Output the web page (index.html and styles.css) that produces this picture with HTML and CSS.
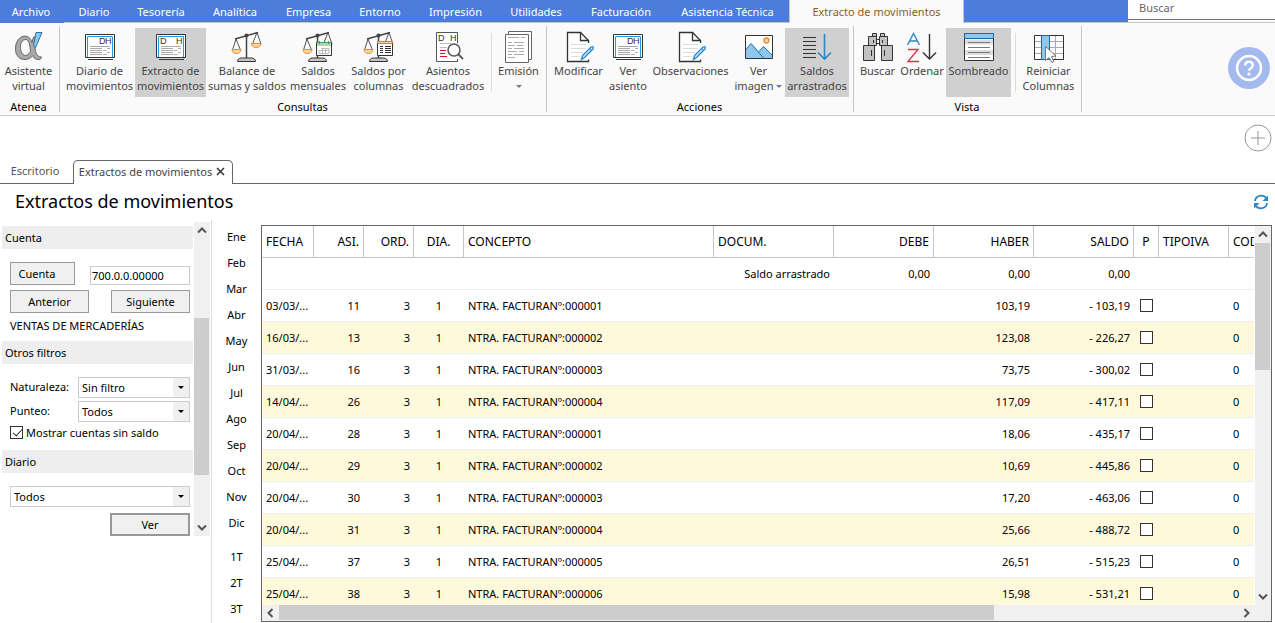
FILE: index.html
```html
<!DOCTYPE html>
<html lang="es">
<head>
<meta charset="utf-8">
<title>Extractos de movimientos</title>
<link rel="stylesheet" href="styles.css">
</head>
<body>
<svg class="sprite" aria-hidden="true">
  <symbol id="scales" viewBox="0 0 32 32">
    <path d="M5 8 1.500 19M5 8l4.500 11M26 1.500 21.500 13M26 1.500l4 11.500" fill="none" stroke="#555"/>
    <path d="M4 8 27 1.500" stroke="#444" stroke-width="1.500"/>
    <path d="M15.500 3v24" stroke="#444" stroke-width="1.500"/>
    <circle cx="15.500" cy="4.500" r="2" fill="#444"/>
    <path d="M1 18.500h9c0 2.500-2 4-4.500 4S1 21 1 18.500ZM20.500 12.500h9.500c0 2.500-2 4-4.800 4s-4.700-1.500-4.700-4Z" fill="#fcd69a" stroke="#e58a3a"/>
    <path d="M6.500 30.500c0-2 1.500-3.500 4-3.500h10c2.500 0 4 1.500 4 3.500Z" fill="#c6c6c6" stroke="#333"/>
  </symbol>
  <symbol id="entry" viewBox="0 0 32 32">
    <path d="M1.500 3.500h29v23h-29Z" fill="#fff" stroke="#333"/>
    <path d="M3.500 26V5.500h25V26" fill="none" stroke="#1a9dd9"/>
    <path d="M6 15.500h20M6 17.500h12M6 19.500h12M6 21.500h12M6 23.500h12M19 19.500h3M23 17.500h3M19 23.500h4M23 21.500h3" stroke="#aaa"/>
    <path d="M4 28.500h25" stroke="#333"/>
  </symbol>
  <symbol id="note" viewBox="0 0 32 32">
    <path d="M25.500 12V9.500L17.500 1.500h-13v29h21v-2" fill="#fff" stroke="#333" stroke-width="1.300"/>
    <path d="M17.500 1.500v8h8" fill="none" stroke="#333" stroke-width="1.300"/>
    <path d="M8 13.500h15M8 17.500h15M8 21.500h12M8 25.500h9" stroke="#ddd"/>
    <path d="m18.500 28.500 1-4L28 16c2-1 3 .5 2 2l-8.500 8.500Z" fill="#c6e4f7" stroke="#2b88c8" stroke-width="1.300"/>
    <path d="m26.500 17.500 2 2" stroke="#2b88c8"/>
  </symbol>
</svg>

<header class="menubar">
  <nav class="tabs">
    <button class="tab tab-file">Archivo</button>
    <button class="tab">Diario</button>
    <button class="tab">Tesorería</button>
    <button class="tab">Analítica</button>
    <button class="tab">Empresa</button>
    <button class="tab">Entorno</button>
    <button class="tab">Impresión</button>
    <button class="tab">Utilidades</button>
    <button class="tab">Facturación</button>
    <button class="tab">Asistencia Técnica</button>
    <button class="tab tab-active">Extracto de movimientos</button>
  </nav>
  <div class="menubar-fill"></div>
  <div class="search"><input type="text" placeholder="Buscar" aria-label="Buscar"></div>
</header>

<section class="ribbon">
  <div class="group">
    <div class="items">
      <button class="item w57"><svg viewBox="0 0 32 32"><path d="M23.500 6 22 15c0 5 1 11 6.500 11 0 2-2 3-4 2.500-3-.5-4-2-4.500-4-6 7-17 5-17.500-6C2 9 9 3.500 14 5.500c3 1 4 3 5 6l1.500-5.500ZM13 8.500c-4 0-6 4-5.500 9 .5 7 6 10 10 3C17 14 16 9 13 8.500Z" fill="#aaa" fill-rule="evenodd" stroke="#666"/><path d="m23 1.500h6l-6.500 15-2-2Z" fill="#8cc8f2" stroke="#2570a8"/></svg><span>Asistente<br>virtual</span></button>
    </div>
    <div class="group-name">Atenea</div>
  </div>
  <div class="group">
    <div class="items">
      <button class="item w71"><svg viewBox="0 0 32 32"><use href="#entry"/><text class="glyph" x="15" y="13">D</text><text class="glyph" x="21" y="13">H</text></svg><span>Diario de<br>movimientos</span></button>
      <button class="item w71 pressed"><svg viewBox="0 0 32 32"><use href="#entry"/><text class="glyph" x="5" y="13">D</text><text class="glyph" x="21" y="13">H</text></svg><span>Extracto de<br>movimientos</span></button>
      <button class="item w82"><svg viewBox="0 0 32 32"><use href="#scales"/></svg><span>Balance de<br>sumas y saldos</span></button>
      <button class="item w60"><svg viewBox="0 0 32 32"><use href="#scales"/><path d="M14.500 11.500h15v13h-15Z" fill="#fff" stroke="#333"/><path d="M15 12h14v3H15Z" fill="#a8d8b4"/><path d="M14.500 11.500h15M17.500 10v3M26.500 10v3" stroke="#4d9a61"/><path d="M19 17.500h8v5H17v-3h10M20.500 17v6M23.500 17v6" fill="none" stroke="#bbb"/></svg><span>Saldos<br>mensuales</span></button>
      <button class="item w61"><svg viewBox="0 0 32 32"><use href="#scales"/><path d="M14.500 11.500h15v13h-15Z" fill="#fff" stroke="#333"/><path d="M14.500 10.500h15v2h-15Z" fill="#fcd69a" stroke="#e07824"/><path d="M17 15.500h3M17 17.500h3M17 19.500h3M17 21.500h3M22 15.500h6M22 17.500h6M22 19.500h6M22 21.500h6" stroke="#333"/></svg><span>Saldos por<br>columnas</span></button>
      <button class="item w78"><svg viewBox="0 0 32 32"><path d="M25.500 12V1.500h-21v29h21V28" fill="#fff" stroke="#555"/><text class="glyph" x="6" y="10">D</text><text class="glyph" x="18" y="10">H</text><path d="M8 12.500h11M8 16.500h7" stroke="#bbb"/><path d="M8 19.500h6M8 22.500h5M8 25.500h7" stroke="#d8102e"/><circle cx="22" cy="19" r="6" fill="#fff" stroke="#555" stroke-width="1.500"/><path d="m26 23 5 5" stroke="#555" stroke-width="1.800"/></svg><span>Asientos<br>descuadrados</span></button>
      <div class="divider"></div>
      <button class="item w45"><svg viewBox="0 0 32 32"><path d="M5.500 4V.5h23v28H26" fill="#fff" stroke="#666"/><path d="M2.500 3.500h23v28h-23Z" fill="#fff" stroke="#666"/><path d="M5 6.500h11M18 6.500h4M5 11.500h4M11 11.500h10M5 14.500h7M14 14.500h6M5 17.500h4M11 17.500h10M5 20.500h9M16 20.500h5M5 23.500h4M11 23.500h10M5 26.500h7" stroke="#aaa"/></svg><span>Emisión<br><i class="caret"></i></span></button>
    </div>
    <div class="group-name">Consultas</div>
  </div>
  <div class="group">
    <div class="items">
      <button class="item w57"><svg viewBox="0 0 32 32"><use href="#note"/></svg><span>Modificar</span></button>
      <button class="item w42"><svg viewBox="0 0 32 32"><use href="#entry"/><text class="glyph" x="15" y="13">D</text><text class="glyph" x="21" y="13">H</text></svg><span>Ver<br>asiento</span></button>
      <button class="item w83"><svg viewBox="0 0 32 32"><use href="#note"/></svg><span>Observaciones</span></button>
      <button class="item w53"><svg viewBox="0 0 32 32"><path d="M2.500 4.500h27v23h-27Z" fill="#fff"/><path d="m2.500 19 5.500-6.500 8 8 4.500-5 9 9v3h-27Z" fill="#8fc6ee"/><path d="m2.500 19 5.500-6.500 13 15M16 20.500l4.500-5 9 9" fill="none" stroke="#2570a8"/><path d="M2.500 4.500h27v23h-27Z" fill="none" stroke="#333"/><circle cx="23.500" cy="9.500" r="2.500" fill="#fcd69a" stroke="#e58a3a" stroke-width="1.300"/></svg><span>Ver<br>imagen <i class="caret"></i></span></button>
      <button class="item w64 pressed"><svg viewBox="0 0 32 32"><path d="M2 6.500h13M2 10.500h13M2 14.500h13M2 18.500h13M2 22.500h13M2 26.500h13" stroke="#333"/><path d="M23.500 3v25M17 21.500l6.500 6.500 6.500-6.500" fill="none" stroke="#2b88c8" stroke-width="1.600"/></svg><span>Saldos<br>arrastrados</span></button>
    </div>
    <div class="group-name">Acciones</div>
  </div>
  <div class="group">
    <div class="items">
      <button class="item w41"><svg viewBox="0 0 32 32"><path d="M10.500 2.500h4v3h-4ZM18.500 2.500h4v3h-4ZM6.500 5.500h8v9h-8ZM17.500 5.500h8v9h-8ZM1.500 14.500h11v15h-11ZM19.500 14.500h11v15h-11Z" fill="#c2c2c2" stroke="#333"/><path d="M14.500 8.500h3M14.500 12.500h3M11.500 9v3M20.500 9v3M9.500 19v6M22.500 19v6" stroke="#333"/></svg><span>Buscar</span></button>
      <button class="item w48"><svg viewBox="0 0 32 32"><path d="M1.500 14 7.500 2.500l6 11.500M4 10h7" fill="none" stroke="#2b88c8" stroke-width="1.400"/><path d="M2 18.500h10L2 30.500h11" fill="none" stroke="#d8384a" stroke-width="1.400"/><path d="M23.500 3v25M17 21.500l6.500 6.500 6.500-6.500" fill="none" stroke="#333" stroke-width="1.400"/></svg><span>Ordenar</span></button>
      <button class="item w65 pressed"><svg viewBox="0 0 32 32"><path d="M1.500 2.500h29v27h-29Z" fill="#fff" stroke="#333"/><path d="M2 8.500h28v5H2ZM2 19h28v5H2Z" fill="#ddd"/><path d="M5 11.500h22M5 16.500h22M5 21.500h22M5 26.500h22" stroke="#777"/><path d="M1.500 2.500h29v5h-29Z" fill="#8fc6ee" stroke="#1f68a5"/></svg><span>Sombreado</span></button>
      <div class="divider"></div>
      <button class="item w57"><svg viewBox="0 0 32 32"><path d="M1.500 4.500h29v24h-29Z" fill="#fff" stroke="#333"/><path d="M2 10.500h28M2 16.500h28M2 22.500h28M22.500 5v23" stroke="#aaa"/><path d="M8.500 4.500h8v24h-8Z" fill="#8fc6ee" stroke="#1f68a5"/><path d="m12.500 15.500 0 14 3.500-3 3 5 2-1-2.500-5 4.500-.5Z" fill="#fff" stroke="#777"/></svg><span>Reiniciar<br>Columnas</span></button>
    </div>
    <div class="group-name">Vista</div>
  </div>
  <button class="help" aria-label="Ayuda"><svg viewBox="0 0 42 42"><circle cx="21" cy="21" r="21" fill="#a4b9ed"/><circle cx="21" cy="21" r="12" fill="none" stroke="#fff" stroke-width="2.500"/><path d="M17.200 18.500c0-5 7.600-5 7.600-.3 0 3-3.800 3-3.800 5.600" fill="none" stroke="#fff" stroke-width="2.500"/><circle cx="21" cy="27" r="1.600" fill="#fff"/></svg></button>
</section>

<div class="toolbar">
  <button class="add" aria-label="Añadir"><svg viewBox="0 0 28 28"><circle cx="14" cy="14" r="13" fill="#fff" stroke="#999"/><path d="M14 7v14M7 14h14" stroke="#999"/></svg></button>
</div>
<nav class="doc-tabs">
  <button class="doc-tab">Escritorio</button>
  <button class="doc-tab doc-current">Extractos de movimientos<svg viewBox="0 0 9 9"><path d="m1 1 7 7M8 1 1 8" stroke="#333" stroke-width="1.500"/></svg></button>
  <span class="doc-rest"></span>
</nav>
<div class="heading">
  <h1>Extractos de movimientos</h1>
  <button class="refresh" aria-label="Actualizar"><svg viewBox="0 0 16 16"><path d="M2 7c.5-6 8.500-7 11.500-2.500M14 9c-.5 6-8.500 7-11.500 2.500" fill="none" stroke="#2b88c8" stroke-width="1.900"/><path d="M15 1.500v5.500H9.500ZM1 14.500V9h5.500Z" fill="#2b88c8"/></svg></button>
</div>

<main class="workspace">
  <aside class="filters">
    <form class="form">
      <h2>Cuenta</h2>
      <div class="block">
        <div class="row"><button type="button" class="btn btn-account">Cuenta</button><input class="account" type="text" value="700.0.0.00000" aria-label="Número de cuenta"></div>
        <div class="row row-nav"><button type="button" class="btn">Anterior</button><button type="button" class="btn">Siguiente</button></div>
        <p class="account-name">VENTAS DE MERCADERÍAS</p>
      </div>
      <h2>Otros filtros</h2>
      <div class="block">
        <div class="field"><label for="nat">Naturaleza:</label><span class="pick"><select id="nat"><option>Sin filtro</option></select></span></div>
        <div class="field"><label for="pun">Punteo:</label><span class="pick"><select id="pun"><option>Todos</option></select></span></div>
        <label class="check"><input type="checkbox" checked>Mostrar cuentas sin saldo</label>
      </div>
      <h2 class="diary-title">Diario</h2>
      <div class="block">
        <span class="pick"><select aria-label="Diario"><option>Todos</option></select></span>
        <button type="button" class="btn btn-view">Ver</button>
      </div>
    </form>
    <div class="vbar"><svg viewBox="0 0 16 17"><path d="m4 10.500 4-4 4 4" /></svg><div class="vthumb side-thumb"></div><svg viewBox="0 0 16 17"><path d="m4 6.500 4 4 4-4"/></svg></div>
  </aside>
  <nav class="periods">
    <button>Ene</button><button>Feb</button><button>Mar</button><button>Abr</button><button>May</button><button>Jun</button><button>Jul</button><button>Ago</button><button>Sep</button><button>Oct</button><button>Nov</button><button>Dic</button>
    <button class="quarter">1T</button><button>2T</button><button>3T</button>
  </nav>
  <section class="grid">
    <div class="view">
      <table>
        <colgroup><col class="c-date"><col class="c-num"><col class="c-num"><col class="c-num"><col class="c-text"><col class="c-doc"><col class="c-sum"><col class="c-sum"><col class="c-sum"><col class="c-p"><col class="c-tax"><col class="c-code"></colgroup>
        <thead><tr><th>FECHA</th><th class="r">ASI.</th><th class="r">ORD.</th><th class="c">DIA.</th><th>CONCEPTO</th><th>DOCUM.</th><th class="r">DEBE</th><th class="r">HABER</th><th class="r">SALDO</th><th class="c">P</th><th>TIPOIVA</th><th>COD</th></tr></thead>
        <tbody>
          <tr><td></td><td></td><td></td><td></td><td></td><td class="r">Saldo arrastrado</td><td class="r">0,00</td><td class="r">0,00</td><td class="r">0,00</td><td></td><td></td><td></td></tr>
          <tr><td>03/03/...</td><td class="r">11</td><td class="r">3</td><td class="c">1</td><td>NTRA. FACTURANº:000001</td><td></td><td></td><td class="r">103,19</td><td class="r">- 103,19</td><td class="c"><input type="checkbox" aria-label="Punteado"></td><td></td><td>0</td></tr>
          <tr class="shade"><td>16/03/...</td><td class="r">13</td><td class="r">3</td><td class="c">1</td><td>NTRA. FACTURANº:000002</td><td></td><td></td><td class="r">123,08</td><td class="r">- 226,27</td><td class="c"><input type="checkbox" aria-label="Punteado"></td><td></td><td>0</td></tr>
          <tr><td>31/03/...</td><td class="r">16</td><td class="r">3</td><td class="c">1</td><td>NTRA. FACTURANº:000003</td><td></td><td></td><td class="r">73,75</td><td class="r">- 300,02</td><td class="c"><input type="checkbox" aria-label="Punteado"></td><td></td><td>0</td></tr>
          <tr class="shade"><td>14/04/...</td><td class="r">26</td><td class="r">3</td><td class="c">1</td><td>NTRA. FACTURANº:000004</td><td></td><td></td><td class="r">117,09</td><td class="r">- 417,11</td><td class="c"><input type="checkbox" aria-label="Punteado"></td><td></td><td>0</td></tr>
          <tr><td>20/04/...</td><td class="r">28</td><td class="r">3</td><td class="c">1</td><td>NTRA. FACTURANº:000001</td><td></td><td></td><td class="r">18,06</td><td class="r">- 435,17</td><td class="c"><input type="checkbox" aria-label="Punteado"></td><td></td><td>0</td></tr>
          <tr class="shade"><td>20/04/...</td><td class="r">29</td><td class="r">3</td><td class="c">1</td><td>NTRA. FACTURANº:000002</td><td></td><td></td><td class="r">10,69</td><td class="r">- 445,86</td><td class="c"><input type="checkbox" aria-label="Punteado"></td><td></td><td>0</td></tr>
          <tr><td>20/04/...</td><td class="r">30</td><td class="r">3</td><td class="c">1</td><td>NTRA. FACTURANº:000003</td><td></td><td></td><td class="r">17,20</td><td class="r">- 463,06</td><td class="c"><input type="checkbox" aria-label="Punteado"></td><td></td><td>0</td></tr>
          <tr class="shade"><td>20/04/...</td><td class="r">31</td><td class="r">3</td><td class="c">1</td><td>NTRA. FACTURANº:000004</td><td></td><td></td><td class="r">25,66</td><td class="r">- 488,72</td><td class="c"><input type="checkbox" aria-label="Punteado"></td><td></td><td>0</td></tr>
          <tr><td>25/04/...</td><td class="r">37</td><td class="r">3</td><td class="c">1</td><td>NTRA. FACTURANº:000005</td><td></td><td></td><td class="r">26,51</td><td class="r">- 515,23</td><td class="c"><input type="checkbox" aria-label="Punteado"></td><td></td><td>0</td></tr>
          <tr class="shade"><td>25/04/...</td><td class="r">38</td><td class="r">3</td><td class="c">1</td><td>NTRA. FACTURANº:000006</td><td></td><td></td><td class="r">15,98</td><td class="r">- 531,21</td><td class="c"><input type="checkbox" aria-label="Punteado"></td><td></td><td>0</td></tr>
        </tbody>
      </table>
    </div>
    <div class="vbar"><svg viewBox="0 0 16 17"><path d="m4 10.500 4-4 4 4"/></svg><div class="vthumb"></div><svg viewBox="0 0 16 17"><path d="m4 6.500 4 4 4-4"/></svg></div>
    <div class="hbar"><svg viewBox="0 0 17 16"><path d="m10.500 4-4 4 4 4"/></svg><div class="hthumb"></div><svg viewBox="0 0 17 16"><path d="m6.500 4 4 4-4 4"/></svg></div>
    <div class="corner"></div>
  </section>
</main>
</body>
</html>
```
FILE: styles.css
```css
* { box-sizing: border-box; }
html, body { margin: 0; height: 100%; }
body {
  display: flex;
  flex-direction: column;
  overflow: hidden;
  background: #fff;
  color: #000;
  font: 11px/15px "Noto Sans", "Open Sans", sans-serif;
}
button, input, select { font: inherit; color: inherit; margin: 0; border-radius: 0; }
button { padding: 0; border: 0; background: none; white-space: nowrap; }
h1, h2, p { margin: 0; font-weight: 400; }
.sprite { display: none; }

/* menu bar */
.menubar { display: flex; flex: none; height: 23px; background: #fafafa; }
.tabs { display: grid; grid-template-columns: 64px 60px 74px 74px 73px 70px 81px 80px 90px 123px 175px; }
.tab { color: #fff; background: #4c7cdc; border-bottom: 1px solid #c6c6c6; }
.tab-file { border-color: #4c7cdc; padding-right: 2px; }
.tab-active { background: #fafafa; color: #8a6212; border: 0; border-left: 1px solid #c6c6c6; border-right: 1px solid #c6c6c6; }
.menubar-fill { flex: 1; background: #4c7cdc; border-bottom: 1px solid #c6c6c6; }
.search { width: 147px; border-bottom: 1px solid #c6c6c6; }
.search input { display: block; width: 100%; height: 20px; padding: 0 10px 4px 11px; border: 0; border-bottom: 1px solid #777; background: #fff; outline: 0; }
.search input::placeholder { color: #666; opacity: 1; }

/* ribbon */
.ribbon { display: flex; flex: none; height: 93px; background: #fafafa; border-bottom: 1px solid #c6c6c6; }
.group { padding: 5px 4px 0; border-right: 1px solid #c6c6c6; border-image: linear-gradient(transparent 4px, #c6c6c6 4px, #c6c6c6 88px, transparent 88px) 1; }
.group:first-child { padding: 5px 2px 0 0; }
.group:nth-child(2) { padding-right: 5px; }
.group:nth-child(3), .group:nth-child(4) { padding-left: 3px; }
.items { display: flex; height: 69px; }
.group-name { padding-top: 2px; text-align: center; }
.item { display: flex; flex-direction: column; align-items: center; padding-top: 3px; color: #444; }
.item svg { width: 32px; height: 32px; flex: none; }
.pressed { background: #d0d0d0; }
.divider { width: 1px; height: 59px; margin: 5px 4px 0; background: #ddd; }
.glyph { font: 9px "Liberation Sans", sans-serif; fill: #333; }
.w41 { width: 41px; }
.w42 { width: 42px; }
.w45 { width: 45px; }
.w48 { width: 48px; }
.w53 { width: 53px; }
.w57 { width: 57px; }
.w60 { width: 60px; }
.w61 { width: 61px; }
.w64 { width: 64px; }
.w65 { width: 65px; }
.w71 { width: 71px; }
.w78 { width: 78px; }
.w82 { width: 82px; }
.w83 { width: 83px; }
.caret { display: inline-block; border: 3px solid transparent; border-top-color: #777; border-bottom: 0; vertical-align: 2px; }
.help { margin: 24px 5px 0 auto; width: 42px; height: 42px; }
.help svg { display: block; width: 42px; height: 42px; }

/* document tabs and heading */
.toolbar { display: flex; flex: none; height: 44px; justify-content: flex-end; padding: 8px 3px 0 0; }
.add, .add svg { display: block; width: 28px; height: 28px; }
.doc-tabs { display: flex; flex: none; height: 24px; color: #444; }
.doc-tab { width: 73px; padding: 0 3px 2px 0; border-bottom: 1px solid #666; color: #555; }
.doc-current { display: flex; align-items: center; justify-content: center; gap: 4px; width: 160px; padding: 0 2px 2px 0; border: 1px solid #666; border-bottom: 0; border-radius: 5px 5px 0 0; color: #444; }
.doc-current svg { width: 9px; height: 9px; }
.doc-rest { flex: 1; border-bottom: 1px solid #666; }
.heading { display: flex; flex: none; justify-content: space-between; align-items: center; height: 36px; padding: 0 6px 0 15px; }
h1 { padding-bottom: 2px; font-size: 18px; line-height: 24px; }
.refresh, .refresh svg { display: block; width: 16px; height: 16px; }

/* workspace */
.workspace { display: flex; flex: 1; min-height: 0; }
.filters { display: flex; align-items: flex-start; width: 212px; padding: 2px 1px 0 2px; border-right: 1px solid #ddd; }
.form { flex: 1; padding: 4px 1px 0 0; }
h2 { height: 23px; padding: 4px 3px; background: #eee; font-size: 11px; line-height: 15px; }
.block { padding: 13px 3px 0 8px; }
.row { display: flex; justify-content: space-between; align-items: flex-end; }
.row-nav { margin-top: 5px; }
.btn { width: 79px; height: 23px; border: 1px solid #999; background: #f0f0f0; }
.btn-account { width: 65px; padding-right: 11px; }
.account { width: 100px; height: 19px; padding: 0 1px; border: 1px solid #ccc; background: #fff; }
.account-name { margin: 5px 0 8px; }
.field { display: flex; justify-content: space-between; height: 24px; }
.field .pick { width: 112px; }
.field label { padding-top: 2px; }
.pick { position: relative; display: block; height: 21px; }
.pick select { display: block; width: 100%; height: 21px; padding: 0 3px; border: 1px solid #ccc; appearance: none; background: linear-gradient(#f0f0f0, #f0f0f0) right / 16px 100% no-repeat #fff; }
.pick::after { content: ""; position: absolute; right: 6px; top: 9px; border: 3px solid transparent; border-top-color: #000; border-bottom: 0; pointer-events: none; }
.check { display: flex; align-items: center; gap: 3px; height: 15px; }
input[type="checkbox"] { appearance: none; display: block; position: relative; width: 13px; height: 13px; border: 1px solid #333; background: #fff; }
input[type="checkbox"]:checked::after { content: ""; position: absolute; left: 4px; top: 0; width: 4px; height: 8px; border: solid #333; border-width: 0 1px 1px 0; transform: rotate(42deg); }
td input[type="checkbox"] { margin: 0 auto; }
.diary-title { margin-top: 10px; }
.btn-view { display: block; width: 80px; margin: 6px 0 0 auto; border: 2px solid #999; }
.periods { display: flex; flex-direction: column; width: 49px; flex: none; padding-top: 3px; }
.periods button { flex: none; height: 26px; }
.periods .quarter { margin-top: 8px; }
.vbar { display: flex; flex-direction: column; justify-content: space-between; width: 16px; background: #f0f0f0; }
.filters .vbar { height: 314px; }
.vbar svg, .hbar svg { width: 17px; height: 17px; flex: none; fill: none; stroke: #555; stroke-width: 2; }
.vbar svg { width: 16px; }
.vthumb { height: 127px; margin: 0 1px 0 0; background: #cdcdcd; }
.grid .vthumb { margin-bottom: auto; }
.side-thumb { height: 157px; margin: auto 1px 44px 0; }
.grid { display: grid; flex: 1; min-width: 0; grid-template: minmax(0, 1fr) 16px / minmax(0, 1fr) 16px; margin: 5px 3px 1px 0; border: 1px solid #666; }
.view { overflow: hidden; border-right: 1px solid #fff; }
.hbar { display: flex; background: #f0f0f0; }
.hbar svg { height: 16px; }
.hthumb { flex: none; width: 72%; height: 15px; margin-right: auto; background: #cdcdcd; }
.corner { background: #f0f0f0; }

/* ledger */
table { width: 1022px; table-layout: fixed; border-collapse: separate; border-spacing: 0; }
.c-date { width: 52px; }
.c-num { width: 50px; }
.c-text { width: 250px; }
.c-doc { width: 120px; }
.c-sum { width: 100px; }
.c-p { width: 25px; }
.c-tax { width: 70px; }
.c-code { width: 55px; }
th, td { height: 32px; padding: 0 4px; text-align: left; font-weight: 400; white-space: nowrap; line-height: 15px; }
th { border-right: 1px solid #c6c6c6; border-bottom: 1px solid #c6c6c6; font-size: 12px; }
td { border-bottom: 1px solid #eee; }
.shade { background: #fff9db; }
th.r, td.r { text-align: right; }
th.c, td.c { text-align: center; padding: 0; }
```
